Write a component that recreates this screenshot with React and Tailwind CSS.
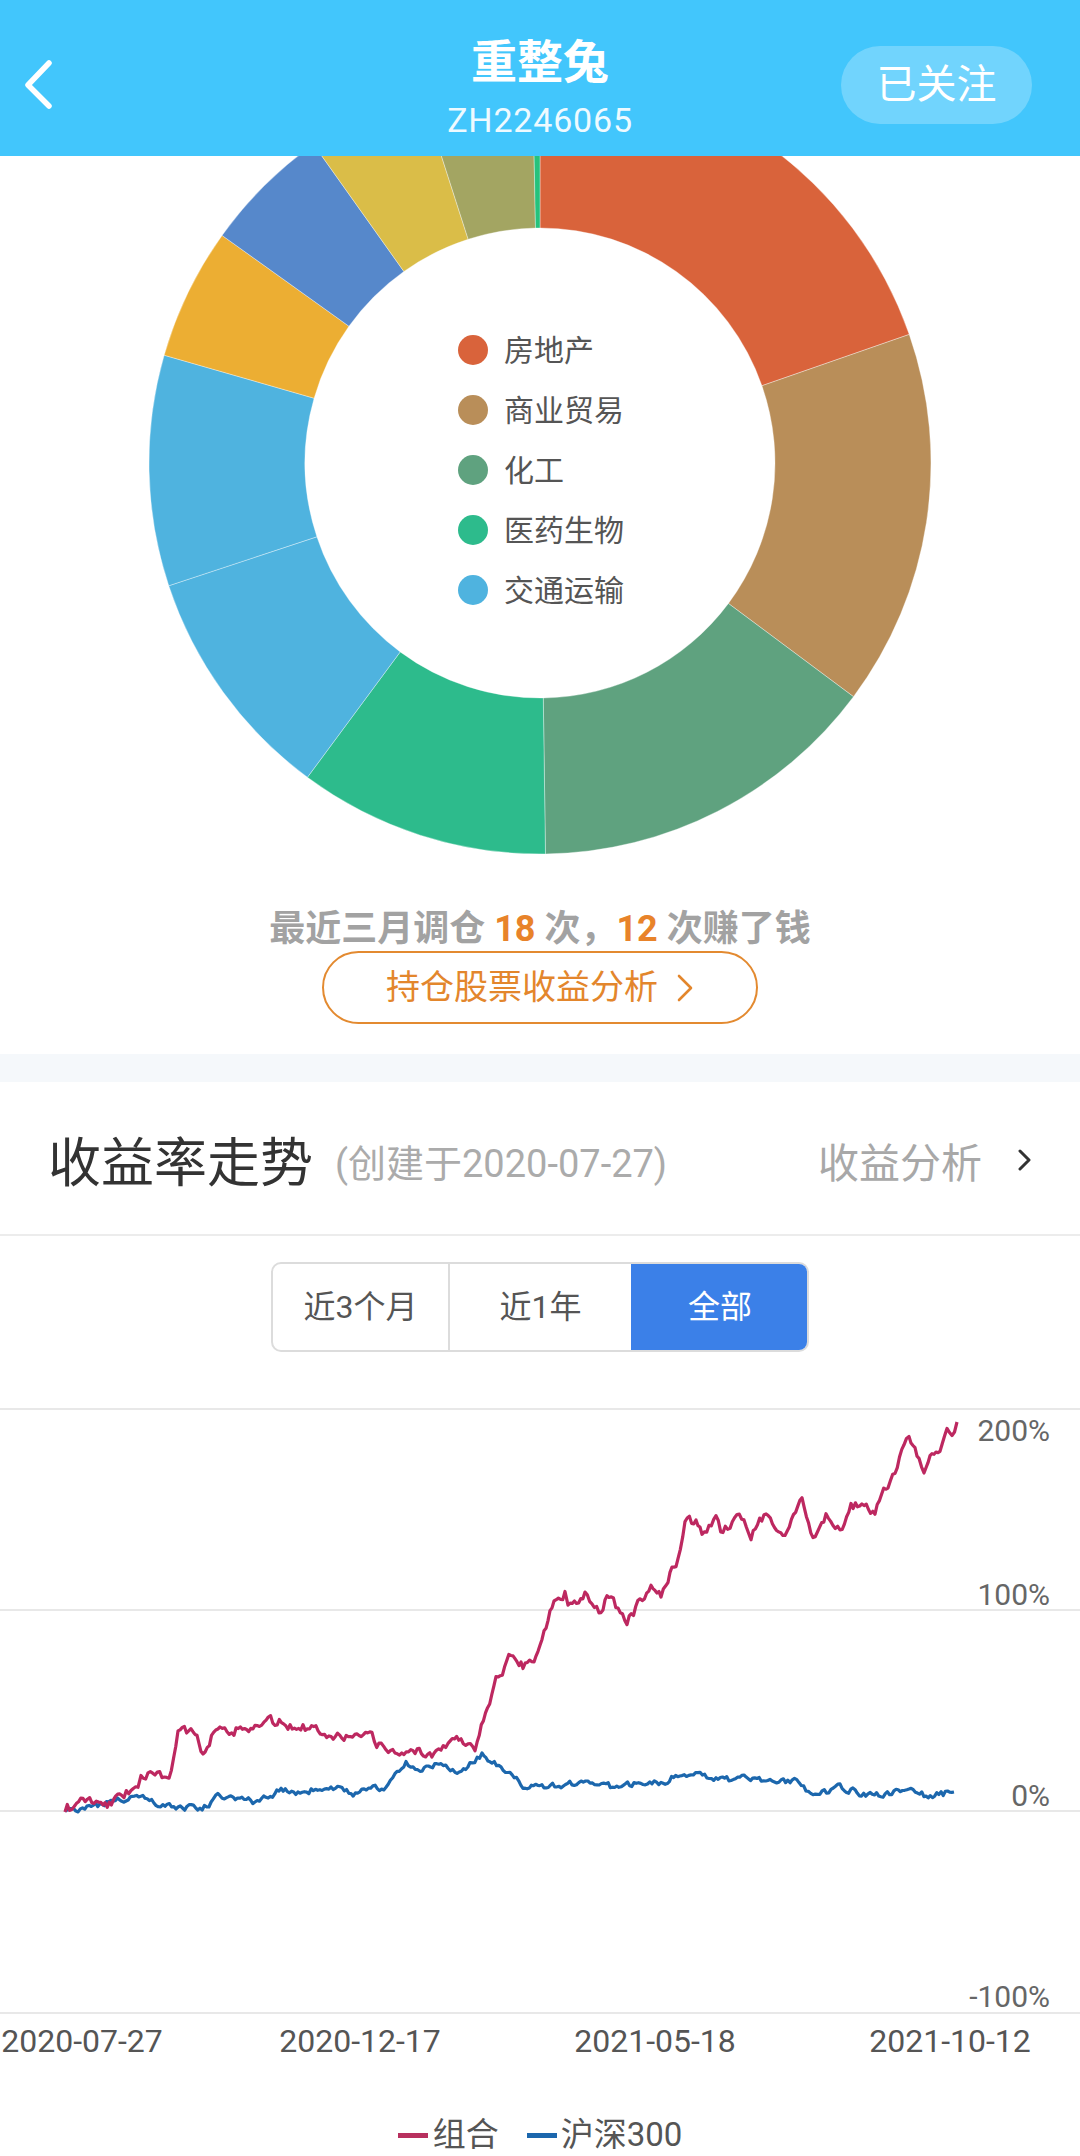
import React from 'react';

// slices of the holdings donut, angles in degrees clockwise from 12 o'clock
const slices = [
    [0, 70.8, '#d9633b'],
    [70.8, 126.7, '#b98e59'],
    [126.7, 179.2, '#5fa27f'],
    [179.2, 216.5, '#2dbb8c'],
    [216.5, 251.7, '#4fb3df'],
    [251.7, 286, '#4fb3df'],
    [286, 305.6, '#ecae33'],
    [305.6, 324.6, '#5688cb'],
    [324.6, 342.2, '#dabd48'],
    [342.2, 358.9, '#a3a562'],
    [358.9, 360, '#26c27c'],
];

const legend = [
    ['#d9633b', '房地产'],
    ['#b98e59', '商业贸易'],
    ['#5fa27f', '化工'],
    ['#2dbb8c', '医药生物'],
    ['#4fb3df', '交通运输'],
];

const pt = (cx, cy, r, a) => {
    const rad = (a * Math.PI) / 180;
    return [cx + r * Math.sin(rad), cy - r * Math.cos(rad)];
};

const arcPath = (cx, cy, R, r, a0, a1) => {
    const large = a1 - a0 > 180 ? 1 : 0;
    const [x0, y0] = pt(cx, cy, R, a0);
    const [x1, y1] = pt(cx, cy, R, a1);
    const [x2, y2] = pt(cx, cy, r, a1);
    const [x3, y3] = pt(cx, cy, r, a0);
    return `M${x0} ${y0} A${R} ${R} 0 ${large} 1 ${x1} ${y1} L${x2} ${y2} A${r} ${r} 0 ${large} 0 ${x3} ${y3} Z`;
};

// key points of the two curves in page coordinates (x, y)
const pinkKeys = [
    [65, 1813], [83, 1800], [103, 1807], [124, 1797], [138, 1783], [141, 1773], [155, 1778], [169, 1780],
    [178, 1732], [193, 1733], [203, 1753], [220, 1722], [234, 1732], [255, 1725], [275, 1723], [303, 1727],
    [344, 1737], [372, 1740], [386, 1752], [413, 1752], [434, 1755], [448, 1742], [461, 1738], [475, 1747],
    [496, 1682], [513, 1653], [523, 1665], [534, 1660], [544, 1633], [554, 1602], [565, 1593], [568, 1610],
    [585, 1593], [599, 1610], [609, 1598], [627, 1623], [640, 1603], [651, 1590], [661, 1597], [668, 1580],
    [678, 1560], [685, 1523], [696, 1522], [702, 1537], [716, 1520], [723, 1537], [737, 1513], [751, 1537],
    [764, 1517], [785, 1533], [802, 1500], [813, 1540], [826, 1517], [840, 1533], [851, 1505], [875, 1510],
    [888, 1487], [895, 1477], [904, 1442], [909, 1437], [919, 1463], [924, 1475], [930, 1453], [940, 1450],
    [947, 1427], [952, 1433], [957, 1423],
];

const blueKeys = [
    [65, 1812], [100, 1806], [124, 1800], [145, 1797], [165, 1808], [200, 1810], [220, 1797], [255, 1803],
    [279, 1792], [300, 1794], [331, 1787], [351, 1795], [386, 1787], [406, 1765], [420, 1770], [441, 1763],
    [455, 1773], [470, 1765], [482, 1755], [492, 1763], [510, 1773], [523, 1787], [544, 1788], [572, 1785],
    [606, 1788], [634, 1785], [661, 1783], [682, 1775], [716, 1780], [744, 1780], [770, 1782], [799, 1783],
    [813, 1798], [840, 1788], [868, 1797], [909, 1790], [926, 1797], [954, 1793],
];

const rng = (seed) => {
    let s = seed;
    return () => {
        s = (s + 0x6d2b79f5) | 0;
        let t = Math.imul(s ^ (s >>> 15), 1 | s);
        t = (t + Math.imul(t ^ (t >>> 7), 61 | t)) ^ t;
        return ((t ^ (t >>> 14)) >>> 0) / 4294967296;
    };
};

const buildLine = (keys, seed, amp, top) => {
    const r = rng(seed);
    const pts = [];
    let n = 0;
    for (let i = 0; i < keys.length - 1; i++) {
        const [x0, y0] = keys[i];
        const [x1, y1] = keys[i + 1];
        const steps = Math.max(1, Math.round((x1 - x0) / 2.2));
        for (let k = 0; k < steps; k++) {
            const t = k / steps;
            n = n * 0.45 + (r() - 0.5) * amp;
            pts.push([x0 + (x1 - x0) * t, y0 + (y1 - y0) * t + (i === 0 && k === 0 ? 0 : n)]);
        }
    }
    pts.push(keys[keys.length - 1]);
    return pts.map(([x, y], i) => `${i ? 'L' : 'M'}${x.toFixed(1)} ${(y - top).toFixed(1)}`).join(' ');
};

const CHART_TOP = 1400;
const pinkPath = buildLine(pinkKeys, 7, 9, CHART_TOP);
const bluePath = buildLine(blueKeys, 21, 6, CHART_TOP);

const App = () => {
    return (
        <div className="h-[2156px] w-[1080px] overflow-hidden bg-white font-[Roboto,'Noto_Sans_CJK_SC',sans-serif]">
            {/* Top bar */}
            <header className="grid h-[156px] grid-cols-[1fr_auto_1fr] bg-[#42c6fc] text-white">
                <div className="pl-[22px] pt-[58px]">
                    <svg width="34" height="52" viewBox="0 0 34 52" fill="none">
                        <path d="M27 5 L6 27 L27 48" stroke="white" strokeWidth="5.5" strokeLinecap="round" strokeLinejoin="round" />
                    </svg>
                </div>
                <div className="flex flex-col items-center pt-[36px]">
                    <h1 className="text-[46px] font-bold leading-[52px]">重整兔</h1>
                    <p className="mt-[12px] text-[34px] leading-[40px] tracking-[0.8px] text-[#eefaff]">ZH2246065</p>
                </div>
                <div className="flex items-start justify-end pr-[48px] pt-[46px]">
                    <button
                        type="button"
                        className="flex h-[78px] w-[191px] items-center justify-center rounded-full bg-white/25 text-[40px] leading-none text-white"
                    >
                        已关注
                    </button>
                </div>
            </header>

            {/* Holdings donut */}
            <div className="relative h-[712px]">
                <svg width="1080" height="712" viewBox="0 0 1080 712" className="block">
                    {slices.map(([a0, a1, c], i) => (
                        <path key={i} d={arcPath(540, 307, 391, 235, a0, a1)} fill={c} stroke="rgba(255,255,255,0.35)" strokeWidth="1" />
                    ))}
                </svg>
                <ul className="absolute left-[458px] top-[164px] flex flex-col">
                    {legend.map(([c, name]) => (
                        <li key={name} className="flex h-[60px] items-center gap-[16px]">
                            <span className="h-[30px] w-[30px] rounded-full" style={{ backgroundColor: c }} />
                            <span className="text-[30px] text-[#555]">{name}</span>
                        </li>
                    ))}
                </ul>
            </div>

            {/* Rebalance summary */}
            <div className="mt-[39px] flex flex-col items-center">
                <p className="text-[36px] font-bold leading-[44px] text-[#a2a2a2]">
                    最近三月调仓 <span className="text-[#e8832a]">18</span> 次，<span className="text-[#e8832a]">12</span> 次赚了钱
                </p>
                <button
                    type="button"
                    className="flex h-[73px] w-[436px] items-center justify-center gap-[18px] rounded-full border-[2.5px] border-[#e38a30] text-[34px] text-[#e3862c]"
                >
                    持仓股票收益分析
                    <svg width="18" height="30" viewBox="0 0 18 30" fill="none">
                        <path d="M3 3 L15 15 L3 27" stroke="#e3862c" strokeWidth="2.6" strokeLinecap="round" strokeLinejoin="round" />
                    </svg>
                </button>
            </div>

            <div className="mt-[30px] h-[28px] bg-[#f5f8fb]" />

            {/* Return trend header */}
            <div className="flex h-[154px] items-center border-b-2 border-[#ececec] pl-[48px] pr-[48px] pt-[12px]">
                <h2 className="text-[53px] leading-none text-[#333]">收益率走势</h2>
                <span className="ml-[22px] text-[38px] leading-none text-[#ababab]">(创建于2020-07-27)</span>
                <span className="ml-auto text-[41px] leading-none text-[#a8a8a8]">收益分析</span>
                <svg width="14" height="22" viewBox="0 0 14 22" fill="none" className="ml-[36px] mb-[8px]">
                    <path d="M2 2 L11 11 L2 20" stroke="#333" strokeWidth="3" strokeLinecap="round" strokeLinejoin="round" />
                </svg>
            </div>

            {/* Period tabs */}
            <div className="mx-auto mt-[26px] flex h-[90px] w-[538px] overflow-hidden rounded-[10px] border-2 border-[#dcdcdc] text-[32px]">
                <button type="button" className="w-[177px] border-r-2 border-[#dcdcdc] text-[#555]">近3个月</button>
                <button type="button" className="w-[181px] text-[#555]">近1年</button>
                <button type="button" className="-my-[2px] -mr-[2px] flex-1 rounded-r-[10px] bg-[#3b80e8] text-white">全部</button>
            </div>

            {/* Chart */}
            <div className="relative mt-[47px] h-[680px]">
                <svg width="1080" height="680" viewBox="0 0 1080 680" className="block">
                    {[10, 211, 412, 614].map((y) => (
                        <line key={y} x1="0" x2="1080" y1={y} y2={y} stroke="#e8e8e8" strokeWidth="2" />
                    ))}
                    <path d={bluePath} fill="none" stroke="#1c67ad" strokeWidth="3.2" strokeLinejoin="round" />
                    <path d={pinkPath} fill="none" stroke="#bd2860" strokeWidth="3.2" strokeLinejoin="round" />
                </svg>
                {[
                    ['200%', 14],
                    ['100%', 178],
                    ['0%', 379],
                    ['-100%', 580],
                ].map(([t, top]) => (
                    <span key={t} className="absolute right-[30px] text-[30px] leading-[36px] text-[#666]" style={{ top }}>
                        {t}
                    </span>
                ))}
                {[
                    ['2020-07-27', 82],
                    ['2020-12-17', 360],
                    ['2021-05-18', 655],
                    ['2021-10-12', 950],
                ].map(([t, left]) => (
                    <span
                        key={t}
                        className="absolute top-[624px] -translate-x-1/2 whitespace-nowrap text-[32px] leading-[36px] text-[#555]"
                        style={{ left }}
                    >
                        {t}
                    </span>
                ))}
            </div>

            {/* Legend */}
            <div className="mt-[33px] flex h-[46px] items-center justify-center text-[33px] text-[#555]">
                <span className="h-[5px] w-[30px] bg-[#b8305e]" />
                <span className="ml-[5px]">组合</span>
                <span className="ml-[28px] h-[5px] w-[30px] bg-[#1c67ad]" />
                <span className="ml-[4px]">沪深300</span>
            </div>
        </div>
    );
};

export default App;
